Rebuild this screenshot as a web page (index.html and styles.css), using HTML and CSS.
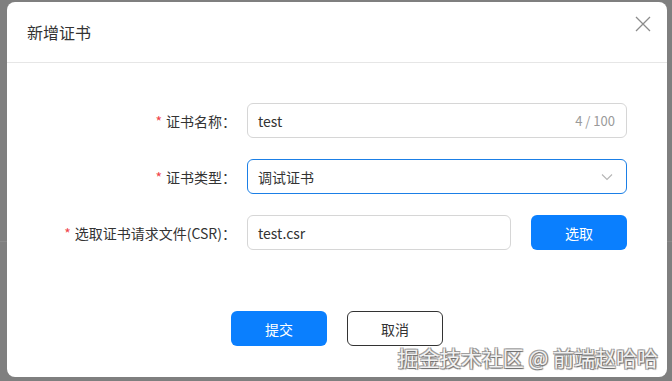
FILE: index.html
```html
<!DOCTYPE html>
<html lang="zh">
<head>
<meta charset="utf-8">
<link rel="stylesheet" href="styles.css">
</head>
<body>
<div class="stage">
  <div class="modal">
    <div class="modal-header">
      <div class="modal-title">新增证书</div>
      <button class="close" aria-label="close">
        <svg width="16" height="16" viewBox="0 0 16 16"><path d="M1 1 L15 15 M15 1 L1 15" stroke="#8c8c8c" stroke-width="1.3" fill="none"/></svg>
      </button>
    </div>
    <div class="modal-body">
      <div class="form">
        <label class="label"><span class="req">*</span>证书名称：</label>
        <div class="field input">
          <span class="value">test</span>
          <span class="count">4 / 100</span>
        </div>

        <label class="label"><span class="req">*</span>证书类型：</label>
        <div class="field input select">
          <span class="value">调试证书</span>
          <svg class="arrow" width="12" height="8" viewBox="0 0 12 8"><path d="M1 1.5 L6 6.5 L11 1.5" stroke="#b5b5b5" stroke-width="1.1" fill="none"/></svg>
        </div>

        <label class="label"><span class="req">*</span>选取证书请求文件(CSR)：</label>
        <div class="field file-row">
          <div class="input file-input"><span class="value">test.csr</span></div>
          <button class="btn primary">选取</button>
        </div>
      </div>
    </div>
    <div class="modal-footer">
      <button class="btn primary">提交</button>
      <button class="btn outline">取消</button>
    </div>
    <div class="watermark">掘金技术社区 @ 前端赵哈哈</div>
  </div>
</div>
</body>
</html>
```

FILE: styles.css
```css
* { box-sizing: border-box; }
html, body { margin: 0; padding: 0; }
body {
  width: 672px;
  height: 381px;
  overflow: hidden;
  background: linear-gradient(to bottom, #7f7f7f 0, #7f7f7f 241px, #8a8a8a 241px, #8a8a8a 242px, #7f7f7f 242px);
  font-family: "Noto Sans CJK SC", "Noto Sans", sans-serif;
  color: #333;
}
.stage {
  padding: 2px 0 0 7px;
}
.modal {
  position: relative;
  width: 660px;
  height: 375px;
  background: #fff;
  border-radius: 8px;
  display: flex;
  flex-direction: column;
}
.modal-header {
  height: 60px;
  border-bottom: 1px solid #e6e6e6;
  display: flex;
  justify-content: space-between;
  align-items: flex-start;
  padding: 0 16px 0 20px;
  box-sizing: content-box;
}
.modal-title {
  font-size: 16px;
  line-height: 22px;
  margin-top: 19px;
  color: #333;
}
.close {
  border: 0;
  background: none;
  padding: 0;
  margin-top: 14px;
  width: 16px;
  height: 16px;
  display: flex;
}
.modal-body {
  padding: 40px 40px 0 0;
}
.form {
  display: grid;
  grid-template-columns: 229px 1fr;
  column-gap: 11px;
  row-gap: 21px;
  align-items: center;
}
.label {
  text-align: right;
  font-size: 14px;
  color: #333;
  white-space: nowrap;
}
.req {
  color: #f0454b;
  margin-right: 4px;
  font-size: 14px;
}
.input {
  height: 35px;
  border: 1px solid #d6d6d6;
  border-radius: 6px;
  display: flex;
  align-items: center;
  padding: 0 11px 0 10px;
  font-size: 14px;
  color: #333;
}
.input .value { flex: 1; }
.count {
  font-size: 13px;
  color: #9a9a9a;
}
.select {
  border-color: #1b7fe6;
}
.select .arrow { margin-right: 2px; }
.file-row {
  display: flex;
  gap: 20px;
}
.file-input { flex: 1; }
.btn {
  width: 96px;
  height: 35px;
  border-radius: 6px;
  font-family: inherit;
  font-size: 14px;
  cursor: pointer;
}
.btn.primary {
  background: #0a7ffe;
  border: 0;
  color: #fff;
}
.btn.outline {
  background: #fff;
  border: 1px solid #333;
  color: #333;
}
.modal-footer {
  display: flex;
  justify-content: center;
  gap: 20px;
  margin-top: 61px;
}
.watermark {
  position: absolute;
  right: 9px;
  bottom: 6px;
  font-size: 21px;
  line-height: 28px;
  color: #f2f2f2;
  text-shadow: 1px 1px 1px #6d6d6d, -1px -1px 0 #a0a0a0, 1px -1px 0 #a0a0a0, -1px 1px 0 #a0a0a0;
  white-space: nowrap;
}
```
